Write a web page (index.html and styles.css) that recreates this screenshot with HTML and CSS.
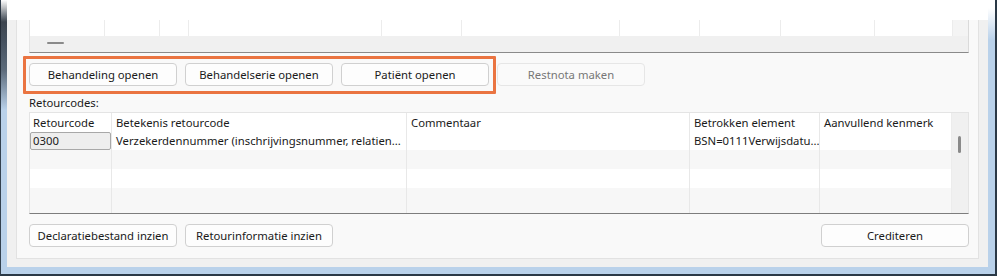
FILE: index.html
```html
<!DOCTYPE html>
<html>
<head>
<meta charset="utf-8">
<link rel="stylesheet" href="styles.css">
</head>
<body>
<div class="window">
  <div class="client">
    <div class="panel">
      <div class="grid-top">
        <div class="gc"></div><div class="gc"></div><div class="gc"></div><div class="gc"></div><div class="gc"></div>
        <div class="gc"></div><div class="gc"></div><div class="gc"></div><div class="gc"></div><div class="gc gc-last"></div>
        <div class="gc-corner"></div>
        <div class="hscroll"><span class="hthumb"></span></div>
      </div>

      <div class="btn-row">
        <button class="btn">Behandeling openen</button>
        <button class="btn">Behandelserie openen</button>
        <button class="btn">Patiënt openen</button>
        <button class="btn btn-disabled">Restnota maken</button>
      </div>

      <div class="label">Retourcodes:</div>

      <div class="codes">
        <div class="c c-head c1">Retourcode</div>
        <div class="c c-head">Betekenis retourcode</div>
        <div class="c c-head">Commentaar</div>
        <div class="c c-head">Betrokken element</div>
        <div class="c c-head c-nob">Aanvullend kenmerk</div>
        <div class="vscroll"><span class="vthumb"></span></div>

        <div class="c c1"><span class="cellbox">0300</span></div>
        <div class="c">Verzekerdennummer (inschrijvingsnummer, relatien...</div>
        <div class="c"></div>
        <div class="c">BSN=0111Verwijsdatu...</div>
        <div class="c c-nob"></div>

        <div class="c alt c1"></div><div class="c alt"></div><div class="c alt"></div><div class="c alt"></div><div class="c alt c-nob"></div>
        <div class="c c1"></div><div class="c"></div><div class="c"></div><div class="c"></div><div class="c c-nob"></div>
        <div class="c alt c1"></div><div class="c alt"></div><div class="c alt"></div><div class="c alt"></div><div class="c alt c-nob"></div>
      </div>

      <div class="btn-row btn-row-bottom">
        <button class="btn">Declaratiebestand inzien</button>
        <button class="btn">Retourinformatie inzien</button>
        <span class="spacer"></span>
        <button class="btn">Crediteren</button>
      </div>
    </div>
  </div>
  <div class="annot"></div>
</div>
</body>
</html>
```

FILE: styles.css
```css
html, body {
  margin: 0;
  padding: 0;
  background: #ffffff;
}

body {
  font-family: "Noto Sans", "DejaVu Sans", sans-serif;
  font-size: 11.3px;
  color: #1a1a1a;
}

.window {
  position: relative;
  width: 997px;
  height: 276px;
  box-sizing: border-box;
  display: flex;
  flex-direction: column;
  border-left: 1px solid #33414f;
  border-right: 2px solid #2a3846;
  border-bottom: 2px solid #2a3846;
  padding: 0 7px 7px 6px;
  background: linear-gradient(to bottom, #ffffff 0, #ffffff 8px, #b9d1ea 40px, #b9d1ea 100%);
}

.window::before {
  content: "";
  position: absolute;
  left: -1px;
  top: 0;
  width: 7px;
  height: 110px;
  background: linear-gradient(to bottom, rgba(255,255,255,0) 0, rgba(30,38,48,0.85) 22px, rgba(30,38,48,0.6) 70px, rgba(30,38,48,0) 110px);
}

.client {
  flex: 1;
  box-sizing: border-box;
  padding: 20px 9px 8px 9px;
  background: linear-gradient(to bottom, #ffffff 0, #ffffff 20px, #f0f0f0 20px);
  display: flex;
  flex-direction: column;
}

.panel {
  flex: 1;
  box-sizing: border-box;
  border-left: 1px solid #e2e2e2;
  border-right: 1px solid #e2e2e2;
  border-bottom: 1px solid #e2e2e2;
  background: #f9f9f9;
  padding: 0 9px 11px 12px;
  display: flex;
  flex-direction: column;
}

/* upper grid */
.grid-top {
  display: grid;
  grid-template-columns: 75px 55px 29px 193px 80px 158px 80px 81px 94px 77px 16px;
  grid-template-rows: 16px 16px;
  border-left: 1px solid #e4e4e4;
  border-right: 1px solid #dadada;
  border-bottom: 1px solid #8a8a8a;
}

.gc {
  background: #ffffff;
  border-right: 1px solid #ececec;
}

.gc-last {
  border-right: none;
}

.gc-corner {
  background: #f4f4f4;
  border-left: 1px solid #ececec;
}

.hscroll {
  grid-column: 1 / -1;
  background: #f0f0f0;
  position: relative;
}

.hthumb {
  position: absolute;
  left: 17px;
  top: 6px;
  width: 17px;
  height: 2px;
  border-radius: 1px;
  background: #8a8a8a;
}

/* buttons */
.btn-row {
  display: flex;
  gap: 8px;
  margin-top: 10px;
}

.btn {
  width: 148px;
  height: 23px;
  box-sizing: border-box;
  margin: 0;
  padding: 0;
  border: 1px solid #d0d0d0;
  border-radius: 4px;
  background: #fdfdfd;
  font-family: inherit;
  font-size: 11.3px;
  color: #1a1a1a;
  text-align: center;
  line-height: 20px;
}

.btn-disabled {
  border-color: #e6e6e6;
  background: #fafafa;
  color: #777777;
}

.spacer {
  flex: 1;
}

.label {
  margin-top: 8px;
  margin-bottom: 2px;
  line-height: 17px;
  height: 16px;
  padding-left: 0;
}

/* codes table */
.codes {
  display: grid;
  grid-template-columns: 82px 295px 283px 130px 131px 17px;
  grid-template-rows: 18px 19px 19px 19px 25px;
  background: #ffffff;
  border-top: 1px solid #e4e4e4;
  border-left: 1px solid #e4e4e4;
  border-right: 1px solid #e4e4e4;
  border-bottom: 1px solid #7d7d7d;
}

.c {
  border-right: 1px solid #e8e8e8;
  padding-left: 4px;
  line-height: 19px;
  white-space: nowrap;
  overflow: hidden;
  background: #ffffff;
}

.c-head {
  line-height: 19px;
}

.c1 {
  padding-left: 3px;
}

.c-nob {
  border-right: none;
}

.alt {
  background: #f7f7f7;
}

.cellbox {
  display: block;
  box-sizing: border-box;
  margin: 1px 0 0 -3px;
  width: 81px;
  height: 18px;
  line-height: 16px;
  padding-left: 2px;
  border: 1px solid #a8a8a8;
  border-radius: 2px;
  background: #eeeeee;
}

.vscroll {
  grid-column: 6;
  grid-row: 1 / -1;
  background: #f0f0f0;
  border-left: 1px solid #ececec;
  position: relative;
}

.vthumb {
  position: absolute;
  left: 6px;
  top: 23px;
  width: 3px;
  height: 17px;
  border-radius: 1.5px;
  background: #8a8a8a;
}

.btn-row-bottom {
  margin-top: 10px;
}

/* annotation overlay */
.annot {
  position: absolute;
  left: 22px;
  top: 56px;
  width: 473px;
  height: 38px;
  box-sizing: border-box;
  border: 3px solid #ea7441;
  border-radius: 1px;
}
```
